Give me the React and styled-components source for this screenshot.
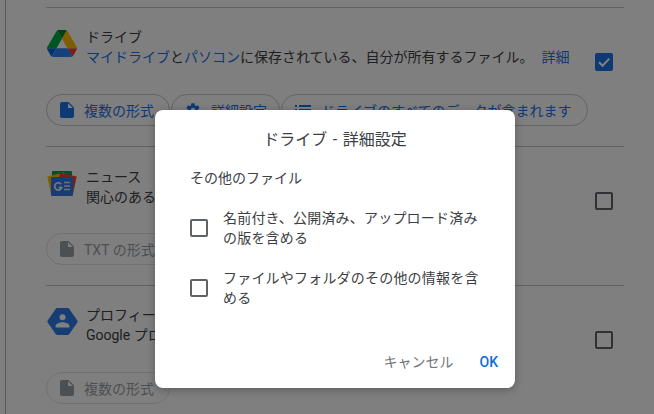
import React from "react";
import styled, { createGlobalStyle } from "styled-components";

const Global = createGlobalStyle`
  html, body { margin: 0; padding: 0; background: #fff; overflow: hidden; }
  body { font-family: Roboto, "Noto Sans CJK JP", sans-serif; -webkit-font-smoothing: antialiased; }
`;

const Stage = styled.div`
  position: relative;
  width: 654px;
  height: 414px;
  overflow: hidden;
  background: #fff;
`;
const Page = styled.main`
  margin-left: 5px;
  width: 619px;
  height: 414px;
  padding: 7px 0 0 40px;
  box-sizing: border-box;
  border-left: 1px solid #b4b4b4;
`;
const Section = styled.section`
  height: 139px;
  box-sizing: border-box;
  border-top: 1px solid #c4c4c4;
  padding-top: ${(p) => p.$top}px;
`;
const Head = styled.div`
  display: grid;
  grid-template-columns: 40px 1fr 18px;
  grid-template-rows: 40px;
  align-items: center;
  padding-right: 11px;
`;
const IconSlot = styled.div`
  display: flex;
  align-self: start;
  margin-top: ${(p) => p.$top}px;
  padding-left: 1px;
`;
const Texts = styled.div`
  font-size: 14px;
  line-height: 20px;
  color: #3c4043;
  white-space: nowrap;
`;
const Link = styled.span`
  color: #1a73e8;
`;
const More = styled(Link)`
  margin-left: 8px;
`;
const Box = styled.span`
  width: 18px;
  height: 18px;
  box-sizing: border-box;
  border-radius: 2px;
  border: 2px solid ${(p) => (p.$checked ? "#1a73e8" : "#5f6368")};
  background: ${(p) => (p.$checked ? "#1a73e8" : "transparent")};
  display: flex;
  align-items: center;
  justify-content: center;
  flex: none;
`;
const HeadBox = styled(Box)`
  align-self: start;
  margin-top: ${(p) => p.$top}px;
`;
const Chips = styled.div`
  display: flex;
  gap: 1px;
  margin-top: ${(p) => p.$top}px;
`;
const Chip = styled.div`
  height: 32px;
  box-sizing: border-box;
  width: ${(p) => p.$w}px;
  border: 1px solid ${(p) => (p.$off ? "#e3e3e3" : "#c8c8c8")};
  border-radius: 16px;
  display: flex;
  align-items: center;
  gap: 10px;
  padding-left: 13px;
  font-size: 14px;
  white-space: nowrap;
  overflow: hidden;
  color: ${(p) => (p.$off ? "#9aa0a6" : "#1a73e8")};
  flex: none;
`;
const Scrim = styled.div`
  position: absolute;
  inset: 0;
  background: rgba(0, 0, 0, 0.5);
`;
const Dialog = styled.div`
  position: absolute;
  left: 155px;
  top: 110px;
  width: 360px;
  height: 278px;
  box-sizing: border-box;
  background: #fff;
  border-radius: 8px;
  box-shadow: 0 2px 8px rgba(0, 0, 0, 0.28);
  padding: 18px 17px 0 35px;
  display: flex;
  flex-direction: column;
`;
const Title = styled.h2`
  margin: 0 0 0 -18px;
  font-size: 16px;
  font-weight: 400;
  line-height: 24px;
  text-align: center;
  word-spacing: 1.5px;
  color: #3c4043;
`;
const Sub = styled.div`
  margin-top: 16px;
  font-size: 14px;
  line-height: 20px;
  color: #3c4043;
`;
const Option = styled.label`
  display: flex;
  align-items: center;
  gap: 15px;
  margin-top: ${(p) => p.$top}px;
  font-size: 14px;
  line-height: 20px;
  letter-spacing: 0.2px;
  color: #3c4043;
`;
const OptionText = styled.span`
  width: 258px;
`;
const Actions = styled.div`
  margin-top: auto;
  margin-bottom: 16px;
  display: flex;
  justify-content: flex-end;
  gap: 26px;
  font-size: 14px;
  line-height: 20px;
`;
const Cancel = styled.span`
  color: #70757a;
`;
const Ok = styled.span`
  color: #0b6fe0;
  font-weight: 500;
`;

const Drive = () => (
  <svg width="30" height="27" viewBox="0 0 87.3 78">
    <path d="m6.6 66.85 3.85 6.65c.8 1.4 1.95 2.5 3.3 3.3l13.75-23.8h-27.5c0 1.55.4 3.1 1.2 4.5z" fill="#0066da" />
    <path d="m43.65 25-13.75-23.8c-1.35.8-2.5 1.9-3.3 3.3l-25.4 44a9.06 9.06 0 0 0-1.2 4.5h27.5z" fill="#00ac47" />
    <path d="m73.55 76.8c1.35-.8 2.5-1.9 3.3-3.3l1.6-2.75 7.65-13.25c.8-1.4 1.2-2.95 1.2-4.5h-27.502l5.852 11.5z" fill="#ea4335" />
    <path d="m43.65 25 13.75-23.8c-1.35-.8-2.9-1.2-4.5-1.2h-18.5c-1.6 0-3.15.45-4.5 1.2z" fill="#00832d" />
    <path d="m59.8 53h-32.3l-13.75 23.8c1.35.8 2.9 1.2 4.5 1.2h50.8c1.6 0 3.15-.45 4.5-1.2z" fill="#2684fc" />
    <path d="m73.4 26.5-12.7-22c-.8-1.4-1.95-2.5-3.3-3.3l-13.75 23.8 16.15 28h27.45c0-1.55-.4-3.1-1.2-4.5z" fill="#ffba00" />
  </svg>
);
const News = () => (
  <svg width="30" height="25" viewBox="0 0 30 25">
    <rect x="5" y="0" width="20" height="8" rx="1" fill="#0c9d58" />
    <path d="M0.3 5.5 17 1.5 19 12 4 23 Z" fill="#fbbc04" />
    <path d="M29.7 5.5 13 1.5 11 12 26 23 Z" fill="#ea4335" />
    <rect x="4" y="6" width="22" height="19" rx="1" fill="#2f7be8" />
    <path d="M14.2 13.2a3.6 3.6 0 1 0 .6 3.2h-3.2" fill="none" stroke="#fff" strokeWidth="1.5" />
    <path d="M17 11.5h6M17 15h6M17 18.5h6" stroke="#dbe6f8" strokeWidth="1.5" />
  </svg>
);
const Profile = () => (
  <svg width="31" height="27" viewBox="0 0 31 27">
    <path d="M8.5 1.2C8.9.5 9.6 0 10.4 0h10.2c.8 0 1.5.5 1.9 1.2l7.8 11.2c.5.7.5 1.5 0 2.2l-7.8 11.2c-.4.7-1.1 1.2-1.9 1.2H10.4c-.8 0-1.5-.5-1.9-1.2L.7 14.6c-.5-.7-.5-1.5 0-2.2z" fill="#2f7be8" />
    <circle cx="15.5" cy="9.2" r="3" fill="#fff" />
    <path d="M8.6 19.5v-1.6c0-2.4 4.6-3.6 6.9-3.6s6.9 1.2 6.9 3.6v1.6z" fill="#fff" />
  </svg>
);
const File = () => (
  <svg width="14" height="16" viewBox="0 0 14 16" fill="currentColor">
    <path d="M2 0h6.6L14 5.4V14a2 2 0 0 1-2 2H2a2 2 0 0 1-2-2V2a2 2 0 0 1 2-2zm6 1.2V6h4.8z" fillRule="evenodd" />
  </svg>
);
const Gear = () => (
  <svg width="16" height="16" viewBox="0 0 24 24" fill="currentColor">
    <path d="M19.4 13a7.5 7.5 0 0 0 0-2l2.1-1.6a.5.5 0 0 0 .1-.6l-2-3.5a.5.5 0 0 0-.6-.2l-2.5 1a7.3 7.3 0 0 0-1.7-1l-.4-2.7a.5.5 0 0 0-.5-.4h-4a.5.5 0 0 0-.5.4l-.4 2.7a7.3 7.3 0 0 0-1.7 1l-2.5-1a.5.5 0 0 0-.6.2l-2 3.5a.5.5 0 0 0 .1.6L4.6 11a7.5 7.5 0 0 0 0 2l-2.1 1.6a.5.5 0 0 0-.1.6l2 3.5c.1.2.4.3.6.2l2.5-1c.5.4 1.1.7 1.7 1l.4 2.7c0 .2.2.4.5.4h4c.3 0 .5-.2.5-.4l.4-2.7c.6-.3 1.2-.6 1.7-1l2.5 1c.2.1.5 0 .6-.2l2-3.5a.5.5 0 0 0-.1-.6zM12 15.5a3.5 3.5 0 1 1 0-7 3.5 3.5 0 0 1 0 7z" />
  </svg>
);
const ListIcon = () => (
  <svg width="16" height="16" viewBox="0 0 16 16" fill="currentColor">
    <path d="M0 3h2v2H0zM4 3h12v2H4zM0 7h2v2H0zM4 7h12v2H4zM0 11h2v2H0zM4 11h12v2H4z" />
  </svg>
);
const Tick = () => (
  <svg width="14" height="14" viewBox="0 0 14 14">
    <path d="M2 7.2 5.6 10.8 12.2 3.6" fill="none" stroke="#fff" strokeWidth="2" />
  </svg>
);

export default function App() {
  return (
    <Stage>
      <Global />
      <Page>
        <Section $top={19}>
          <Head>
            <IconSlot $top={3}><Drive /></IconSlot>
            <Texts>
              <div>ドライブ</div>
              <div><Link>マイドライブ</Link>と<Link>パソコン</Link>に保存されている、自分が所有するファイル。<More>詳細</More></div>
            </Texts>
            <HeadBox $checked $top={26}><Tick /></HeadBox>
          </Head>
          <Chips $top={27}>
            <Chip $w={124}><File />複数の形式</Chip>
            <Chip $w={109}><Gear />詳細設定</Chip>
            <Chip $w={307}><ListIcon />ドライブのすべてのデータが含まれます</Chip>
          </Chips>
        </Section>
        <Section $top={20}>
          <Head>
            <IconSlot $top={4}><News /></IconSlot>
            <Texts>
              <div>ニュース</div>
              <div>関心のあるトピックの設定</div>
            </Texts>
            <HeadBox $top={25} />
          </Head>
          <Chips $top={26}>
            <Chip $w={180} $off><File />TXT の形式</Chip>
          </Chips>
        </Section>
        <Section $top={19}>
          <Head>
            <IconSlot $top={3}><Profile /></IconSlot>
            <Texts>
              <div>プロフィール</div>
              <div>Google プロフィールの情報</div>
            </Texts>
            <HeadBox $top={26} />
          </Head>
          <Chips $top={27}>
            <Chip $w={124} $off><File />複数の形式</Chip>
          </Chips>
        </Section>
      </Page>
      <Scrim />
      <Dialog role="dialog">
        <Title>ドライブ - 詳細設定</Title>
        <Sub>その他のファイル</Sub>
        <Option $top={20}>
          <Box />
          <OptionText>名前付き、公開済み、アップロード済みの版を含める</OptionText>
        </Option>
        <Option $top={20}>
          <Box />
          <OptionText>ファイルやフォルダのその他の情報を含める</OptionText>
        </Option>
        <Actions>
          <Cancel>キャンセル</Cancel>
          <Ok>OK</Ok>
        </Actions>
      </Dialog>
    </Stage>
  );
}
